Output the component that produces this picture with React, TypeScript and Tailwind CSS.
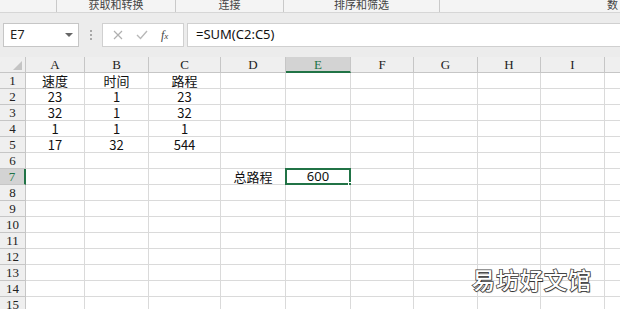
const COLS = [
  { name: "A", w: "w-[59px]" },
  { name: "B", w: "w-[64px]" },
  { name: "C", w: "w-[72px]" },
  { name: "D", w: "w-[65px]" },
  { name: "E", w: "w-[65px]" },
  { name: "F", w: "w-[63px]" },
  { name: "G", w: "w-[64px]" },
  { name: "H", w: "w-[63px]" },
  { name: "I", w: "w-[64px]" },
  { name: "J", w: "w-[40px]" },
];

const DATA: Record<number, string[]> = {
  1: ["速度", "时间", "路程"],
  2: ["23", "1", "23"],
  3: ["32", "1", "32"],
  4: ["1", "1", "1"],
  5: ["17", "32", "544"],
  7: ["", "", "", "总路程", "600"],
};

const serif = "font-['Liberation_Serif','Noto_Sans_CJK_SC',serif]";

const Ribbon = () => (
  <div className="flex h-[13px] border-b border-[#d6d6d6] bg-[#f4f4f4] text-[11px] leading-[10px] text-[#444] overflow-hidden">
    <div className="w-[57px] shrink-0 border-r border-[#c9c9c9]" />
    <div className="w-[119px] shrink-0 border-r border-[#c9c9c9] text-center">获取和转换</div>
    <div className="w-[108px] shrink-0 border-r border-[#c9c9c9] text-center">连接</div>
    <div className="w-[156px] shrink-0 border-r border-[#c9c9c9] text-center">排序和筛选</div>
    <div className="flex-1 pl-[167px]">数</div>
  </div>
);

const FormulaBar = () => (
  <div className="flex h-[44px] items-start pt-[10px] bg-[#ececec]">
    <div className="ml-[3px] flex h-[24px] w-[76px] shrink-0 items-center justify-between border border-[#c6c6c6] bg-white pl-[6px] pr-[5px] text-[13px] text-[#222]">
      <span>E7</span>
      <svg width="8" height="5" viewBox="0 0 8 5">
        <path d="M0 0 L8 0 L4 4 Z" fill="#666" />
      </svg>
    </div>
    <div className="flex h-[24px] w-[23px] shrink-0 flex-col items-center justify-center gap-[2px]">
      <div className="h-[2px] w-[2px] bg-[#a8a8a8]" />
      <div className="h-[2px] w-[2px] bg-[#a8a8a8]" />
      <div className="h-[2px] w-[2px] bg-[#a8a8a8]" />
    </div>
    <div className="flex h-[24px] w-[82px] shrink-0 items-center border border-[#d0d0d0] bg-white">
      <svg className="ml-[10px]" width="10" height="10" viewBox="0 0 10 10">
        <path d="M1 1 L9 9 M9 1 L1 9" stroke="#b0b0b0" strokeWidth="1.2" />
      </svg>
      <svg className="ml-[13px]" width="12" height="10" viewBox="0 0 12 10">
        <path d="M1 5 L4.5 8.5 L11 1" stroke="#b8b8b8" strokeWidth="1.4" fill="none" />
      </svg>
      <span className={`ml-[13px] ${serif} italic text-[12px] text-[#444]`}>
        f<span className="text-[9px]">x</span>
      </span>
    </div>
    <div className="ml-[3px] flex h-[24px] flex-1 items-center border border-r-0 border-[#d0d0d0] bg-white pl-[8px] text-[13px] text-[#111]">
      =SUM(C2:C5)
    </div>
  </div>
);

const HeaderRow = () => (
  <div className="flex h-[16px] bg-[#efefef]">
    <div className="relative w-[26px] shrink-0 border-r border-b border-[#c6c6c6]">
      <svg className="absolute right-[3px] bottom-[2px]" width="9" height="9" viewBox="0 0 9 9">
        <path d="M9 0 L9 9 L0 9 Z" fill="#c4c4c4" />
      </svg>
    </div>
    {COLS.map((c) =>
      c.name === "E" ? (
        <div
          key={c.name}
          className={`${c.w} shrink-0 border-r border-b-2 border-r-[#c6c6c6] border-b-[#217346] bg-[#d3d3d3] text-center text-[13px] leading-[15px] text-[#217346] ${serif}`}
        >
          {c.name}
        </div>
      ) : (
        <div
          key={c.name}
          className={`${c.w} shrink-0 border-r border-b border-[#c6c6c6] text-center text-[13px] leading-[15px] text-[#222] ${serif}`}
        >
          {c.name}
        </div>
      )
    )}
  </div>
);

const Row = ({ n }: { n: number }) => {
  const vals = DATA[n] || [];
  const active = n === 7;
  return (
    <div className="flex h-[16px]">
      <div
        className={`w-[26px] shrink-0 border-b border-[#c6c6c6] text-center text-[13px] leading-[15px] ${serif} ${
          active
            ? "bg-[#d3d3d3] border-r-2 border-r-[#217346] text-[#217346]"
            : "bg-[#efefef] border-r border-r-[#c6c6c6] text-[#222]"
        }`}
      >
        {n}
      </div>
      {COLS.map((c, i) => {
        const v = vals[i] || "";
        const sel = active && c.name === "E";
        return (
          <div
            key={c.name}
            className={`relative ${c.w} shrink-0 border-r border-b border-[#dadada] bg-white text-center text-[13px] leading-[15px] text-[#111] ${
              sel ? "font-['Noto_Sans',sans-serif]" : "font-['Noto_Sans_CJK_SC',sans-serif]"
            }`}
          >
            {v}
            {sel && (
              <>
                <div className="absolute -left-[1px] -top-[1px] -right-[1px] -bottom-[1px] border-2 border-[#217346]" />
                <div className="absolute -right-[3px] -bottom-[3px] h-[5px] w-[5px] border border-white bg-[#217346]" />
              </>
            )}
          </div>
        );
      })}
    </div>
  );
};

export default function App() {
  const rows = Array.from({ length: 15 }, (_, i) => i + 1);
  return (
    <div className="relative h-[309px] w-[620px] overflow-hidden bg-[#ececec] font-['Noto_Sans','Noto_Sans_CJK_SC',sans-serif]">
      <Ribbon />
      <FormulaBar />
      <HeaderRow />
      {rows.map((n) => (
        <Row key={n} n={n} />
      ))}
      <div className="absolute left-[472px] top-[262px] font-['Noto_Sans_CJK_SC',sans-serif] text-[23px] font-medium tracking-[1px] text-white [-webkit-text-stroke:1.6px_#444] [paint-order:stroke_fill] [text-shadow:1px_1px_1px_rgba(0,0,0,0.3)]">
        易坊好文馆
      </div>
    </div>
  );
}
